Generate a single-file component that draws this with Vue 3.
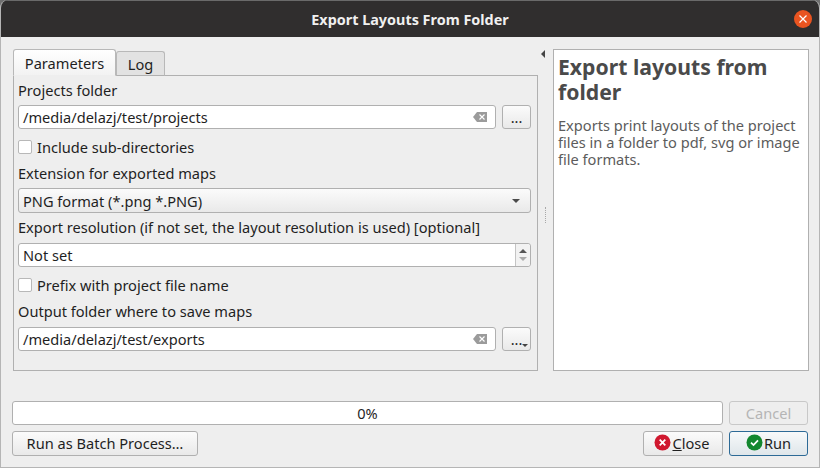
<template>
  <div class="window">
    <header class="titlebar">
      <span class="title">Export Layouts From Folder</span>
      <span class="close-x">
        <svg width="18" height="18" viewBox="0 0 18 18">
          <circle cx="9" cy="9" r="9" fill="#e95420" />
          <path d="M5.5 5.5l7 7M12.5 5.5l-7 7" stroke="#fff" stroke-width="1.2" fill="none" />
        </svg>
      </span>
    </header>

    <main class="content">
      <section class="left">
        <div class="tabs">
          <div class="tab active">Parameters</div>
          <div class="tab">Log</div>
        </div>
        <div class="pane">
          <div class="lbl">Projects folder</div>
          <div class="file-row">
            <div class="input grow">
              <span class="val">/media/delazj/test/projects</span>
              <svg class="clear" width="14" height="10" viewBox="0 0 14 10">
                <path d="M4 0h10v10H4L0 5z" fill="#9b9b9b" />
                <path d="M6.5 2.5l5 5M11.5 2.5l-5 5" stroke="#fff" stroke-width="1.1" />
              </svg>
            </div>
            <div class="btn dots">...</div>
          </div>
          <div class="check"><span class="box"></span>Include sub-directories</div>
          <div class="lbl">Extension for exported maps</div>
          <div class="combo">
            <span class="val">PNG format (*.png *.PNG)</span>
            <span class="arrow"></span>
          </div>
          <div class="lbl wide-gap">Export resolution (if not set, the layout resolution is used) [optional]</div>
          <div class="input spin">
            <span class="val">Not set</span>
            <div class="spin-btns">
              <span class="up"></span>
              <span class="down"></span>
            </div>
          </div>
          <div class="check"><span class="box"></span>Prefix with project file name</div>
          <div class="lbl last">Output folder where to save maps</div>
          <div class="file-row">
            <div class="input grow">
              <span class="val">/media/delazj/test/exports</span>
              <svg class="clear" width="14" height="10" viewBox="0 0 14 10">
                <path d="M4 0h10v10H4L0 5z" fill="#9b9b9b" />
                <path d="M6.5 2.5l5 5M11.5 2.5l-5 5" stroke="#fff" stroke-width="1.1" />
              </svg>
            </div>
            <div class="btn dots">...<span class="mini-arrow"></span></div>
          </div>
        </div>
      </section>

      <div class="splitter">
        <span class="collapse"></span>
        <span class="grip"></span>
      </div>

      <aside class="help">
        <h2>Export layouts from folder</h2>
        <p>Exports print layouts of the project files in a folder to pdf, svg or image file formats.</p>
      </aside>
    </main>

    <div class="progress-row">
      <div class="progress">0%</div>
      <div class="btn side disabled">Cancel</div>
    </div>

    <footer class="button-row">
      <div class="btn batch">Run as Batch Process…</div>
      <div class="spacer"></div>
      <div class="btn close">
        <svg width="17" height="17" viewBox="0 0 17 17">
          <circle cx="8.5" cy="8.5" r="8" fill="#d0182f" />
          <path d="M5.7 5.7l5.6 5.6M11.3 5.7l-5.6 5.6" stroke="#fff" stroke-width="1.8" />
        </svg>
        <span><u>C</u>lose</span>
      </div>
      <div class="btn side run">
        <svg width="17" height="17" viewBox="0 0 17 17">
          <circle cx="8.5" cy="8.5" r="8" fill="#13872f" />
          <path d="M5 8.7l2.5 2.4L12 6.4" stroke="#fff" stroke-width="1.8" fill="none" />
        </svg>
        <span>Run</span>
      </div>
    </footer>
  </div>
</template>

<script setup>
</script>

<style>
html, body { margin: 0; background: #6f6f6f; }
</style>

<style scoped>
.window {
  width: 820px;
  height: 468px;
  box-sizing: border-box;
  display: flex;
  flex-direction: column;
  overflow: hidden;
  background: #eeeeee;
  border-left: 1px solid #b5b5b5;
  border-right: 1px solid #b5b5b5;
  border-bottom: 1px solid #b5b5b5;
  border-radius: 8px 8px 0 0;
  font-family: "Noto Sans", "Open Sans", sans-serif;
  font-size: 14.6px;
  color: #1f1f1f;
}

.titlebar {
  margin: 0 -1px;
  height: 37px;
  flex: none;
  display: flex;
  align-items: center;
  justify-content: center;
  position: relative;
  background: #302e2e;
  border-top: 1px solid #6a6a6a;
  box-sizing: border-box;
  color: #f0f0f0;
  font-weight: 700;
  font-size: 14.4px;
}
.close-x { position: absolute; right: 8px; top: 9px; line-height: 0; }

.content {
  display: flex;
  height: 322px;
  margin-top: 12px;
  padding: 0 11px;
  flex: none;
}

.left { width: 525px; flex: none; display: flex; flex-direction: column; margin-left: 1px; }
.tabs { display: flex; height: 27px; align-items: flex-end; margin-bottom: -1px; position: relative; }
.tab {
  box-sizing: border-box;
  height: 25px;
  width: 49px;
  display: flex;
  align-items: center;
  justify-content: center;
  border: 1px solid #b8b8b8;
  border-bottom: 1px solid #b0b0b0;
  border-radius: 3px 3px 0 0;
  background: #e2e2e2;
}
.tab.active {
  width: 103px;
  height: 27px;
  background: linear-gradient(#ffffff, #f2f2f2);
  border-bottom-color: #eeeeee;
  position: relative;
  z-index: 1;
}

.pane {
  flex: 1;
  box-sizing: border-box;
  border: 1px solid #b0b0b0;
  padding: 4px 6px 0 4px;
  display: flex;
  flex-direction: column;
}
.lbl { height: 21px; line-height: 21px; white-space: nowrap; margin-bottom: 4px; flex: none; }
.lbl.wide-gap { margin-top: 4px; margin-bottom: 5px; }
.lbl.last { margin-bottom: 5px; }

.file-row { display: flex; gap: 6px; height: 24px; flex: none; }
.grow { flex: 1; }

.input {
  box-sizing: border-box;
  height: 24px;
  display: flex;
  align-items: center;
  background: #fff;
  border: 1px solid #b0b0b0;
  border-radius: 3px;
  padding-left: 4px;
}
.val { flex: 1; white-space: nowrap; }
.clear { margin-right: 8px; }

.btn {
  box-sizing: border-box;
  display: flex;
  align-items: center;
  justify-content: center;
  border: 1px solid #b0b0b0;
  border-radius: 3px;
  background: linear-gradient(#fbfbfb, #e9e9e9);
  white-space: nowrap;
}
.dots { width: 29px; height: 24px; position: relative; padding-bottom: 1px; }
.mini-arrow {
  position: absolute;
  right: 2px;
  bottom: 3px;
  border: 3px solid transparent;
  border-top: 3px solid #444;
  border-bottom: 0;
}

.check { height: 22px; margin: 7px 0 5px; display: flex; align-items: center; white-space: nowrap; flex: none; }
.box {
  box-sizing: border-box;
  width: 14px;
  height: 14px;
  margin-right: 5px;
  background: #fff;
  border: 1px solid #b8b8b8;
  border-radius: 2px;
}

.combo {
  box-sizing: border-box;
  height: 25px;
  flex: none;
  display: flex;
  align-items: center;
  padding: 0 10px 0 4px;
  border: 1px solid #b0b0b0;
  border-radius: 3px;
  background: linear-gradient(#fbfbfb, #e9e9e9);
}
.arrow { border: 4px solid transparent; border-top: 4px solid #4a4a4a; border-bottom: 0; margin-left: auto; }

.spin { padding-right: 0; flex: none; }
.spin-btns {
  width: 14px;
  height: 100%;
  border-left: 1px solid #c4c4c4;
  background: #f2f2f2;
  border-radius: 0 3px 3px 0;
  display: flex;
  flex-direction: column;
  align-items: center;
  justify-content: center;
  gap: 4px;
}
.up { border: 4px solid transparent; border-bottom: 4px solid #555; border-top: 0; }
.down { border: 4px solid transparent; border-top: 4px solid #aaa; border-bottom: 0; }

.splitter {
  width: 15px;
  flex: none;
  position: relative;
}
.collapse {
  position: absolute;
  left: 3px;
  top: 1px;
  border: 4px solid transparent;
  border-right: 4px solid #444;
  border-left: 0;
}
.grip {
  position: absolute;
  left: 7px;
  top: 158px;
  height: 16px;
  border-left: 1px dotted #a8a8a8;
}

.help {
  width: 256px;
  height: 322px;
  flex: none;
  box-sizing: border-box;
  background: #fff;
  border: 1px solid #b0b0b0;
  padding: 4px;
  color: #5c5c5c;
}
.help h2 {
  margin: 0 0 13px;
  font-size: 21.2px;
  line-height: 25px;
  font-weight: 700;
  color: #4a4a4a;
}
.help p { margin: 0; line-height: 17px; }

.progress-row, .button-row {
  display: flex;
  flex: none;
  padding: 0 11px;
  gap: 6px;
}
.progress-row { margin-top: 30px; height: 24px; }
.button-row { margin-top: 6px; height: 25px; }
.button-row .btn { padding-bottom: 2px; }
.progress {
  flex: 1;
  box-sizing: border-box;
  background: #fff;
  border: 1px solid #b0b0b0;
  border-radius: 3px;
  display: flex;
  align-items: center;
  justify-content: center;
}
.side { width: 79px; }
.disabled { color: #b5b5b5; background: #eeeeee; border-color: #c8c8c8; }
.batch { width: 186px; }
.spacer { flex: 1; }
.close { width: 80px; gap: 1px; padding-right: 2px; }
.run { gap: 1px; border-color: #2d6a96; background: linear-gradient(#f7f9fa, #dfe6ea); }
.button-row svg { flex: none; }
</style>
